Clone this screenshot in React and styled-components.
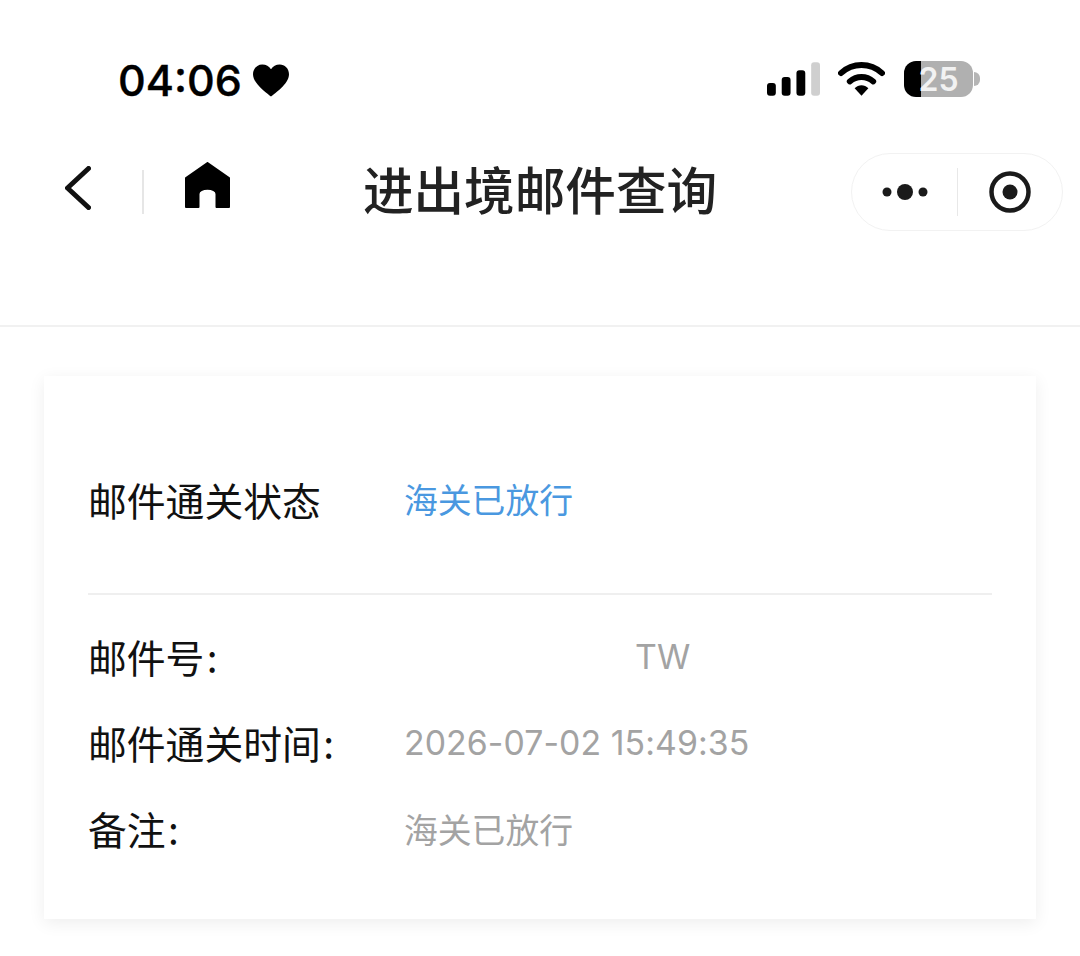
import React from 'react'
import styled, { createGlobalStyle } from 'styled-components'

const GlobalStyle = createGlobalStyle`
    html, body {
        margin: 0;
        padding: 0;
        background: #fff;
        font-family: Inter, "Noto Sans CJK SC", "Liberation Sans", sans-serif;
    }
`

const Page = styled.div`
    width: 1080px;
    height: 956px;
    overflow: hidden;
    background: #fff;
`

const StatusBar = styled.div`
    height: 132px;
    box-sizing: border-box;
    padding: 54px 100px 0 118px;
    display: flex;
    justify-content: space-between;
    align-items: flex-start;
`

const Clock = styled.div`
    display: flex;
    align-items: center;
    height: 52px;
    gap: 11px;
    font-size: 43px;
    font-weight: 500;
    color: #000;
    -webkit-text-stroke: 0.4px #000;
`

const StatusIcons = styled.div`
    display: flex;
    align-items: center;
    height: 50px;
`

const Wifi = styled.svg`
    margin: 0 19px 0 18px;
`

const Battery = styled.div`
    width: 69px;
    height: 36px;
    border-radius: 12px;
    overflow: hidden;
    display: flex;
    align-items: center;
    justify-content: center;
    font-size: 32px;
    font-weight: 600;
    color: #f2f2f2;
    background: linear-gradient(90deg, #000 0 17px, #b0b0b0 17px);
`

const BatteryCap = styled.div`
    width: 6px;
    height: 14px;
    margin-left: 1px;
    background: #b5b5b5;
    border-radius: 0 6px 6px 0;
`

const NavBar = styled.div`
    height: 195px;
    box-sizing: border-box;
    padding-top: 21px;
    border-bottom: 2px solid #f1f1f1;
    display: grid;
    grid-template-columns: 1fr auto 1fr;
    align-items: start;
`

const NavLeft = styled.div`
    display: flex;
    align-items: center;
    height: 78px;
    padding-left: 65px;
`

const BackIcon = styled.svg`
    margin-top: -9px;
`

const NavDivider = styled.div`
    width: 2px;
    height: 44px;
    margin: 0 41px 0 51px;
    background: #e6e6e6;
`

const Title = styled.div`
    height: 78px;
    line-height: 70px;
    font-size: 50.6px;
    font-weight: 500;
    color: #222;
    font-family: "Noto Sans CJK SC", sans-serif;
`

const Capsule = styled.div`
    justify-self: end;
    margin-right: 17px;
    width: 212px;
    height: 78px;
    box-sizing: border-box;
    border: 1px solid #f2f2f2;
    border-radius: 39px;
    display: flex;
    align-items: center;
    padding-left: 30px;
`

const CapsuleDivider = styled.div`
    width: 1px;
    height: 48px;
    margin: 0 31px 0 28px;
    background: #e8e8e8;
`

const Card = styled.div`
    width: 992px;
    height: 543px;
    margin: 49px 0 0 44px;
    box-sizing: border-box;
    padding: 0 44px;
    background: #fff;
    box-shadow: 0 4px 16px rgba(0, 0, 0, 0.07);
    font-family: "Noto Sans CJK SC", sans-serif;
`

const StatusRow = styled.div`
    height: 219px;
    display: flex;
    align-items: center;
    padding-top: 28px;
    box-sizing: border-box;
    border-bottom: 2px solid #efefef;
`

const Details = styled.div`
    padding-top: 18px;
`

const Row = styled.div`
    height: 86px;
    display: flex;
    align-items: center;
`

const Label = styled.div`
    width: 316px;
    flex: none;
    box-sizing: border-box;
    font-size: 38.8px;
    color: #111;
`

const Value = styled.div`
    font-size: 33.8px;
    color: ${p => p.$accent ? '#4a98e0' : '#a3a3a3'};
    padding-left: ${p => p.$indent || 0}px;
    font-family: ${p => p.$latin ? 'Inter, "Noto Sans CJK SC", sans-serif' : 'inherit'};
    letter-spacing: ${p => p.$latin ? '0.08px' : '0'};
`

const HomeIcon = styled.svg`
    margin-top: -14px;
`

const rows = [
    { label: '邮件号\u200a:', value: 'TW', indent: 231, latin: true },
    { label: '邮件通关时间\u200a:', value: '2026-07-02 15:49:35', latin: true },
    { label: '备注\u200a:', value: '海关已放行' },
]

const App = () => (
    <Page>
        <GlobalStyle />
        <StatusBar>
            <Clock>
                04:06
                <svg width="36" height="33" viewBox="0 0 37 33">
                    <path d="M18.5 33C15 30 0 20 0 10C0 4 4.500 0 9.500 0C13.500 0 16.500 2 18.500 5C20.500 2 23.500 0 27.500 0C32.500 0 37 4 37 10C37 20 22 30 18.500 33Z" fill="#000" />
                </svg>
            </Clock>
            <StatusIcons>
                <svg width="53" height="34" viewBox="0 0 54 34">
                    <rect x="0" y="21" width="9" height="13" rx="3" fill="#000" />
                    <rect x="15" y="15" width="9" height="19" rx="3" fill="#000" />
                    <rect x="30" y="8" width="9" height="26" rx="3" fill="#000" />
                    <rect x="45" y="0" width="9" height="34" rx="3" fill="#cfcfcf" />
                </svg>
                <Wifi width="47" height="34" viewBox="0 0 48 34">
                    <path d="M3 11C15 0 33 0 45 11" fill="none" stroke="#000" strokeWidth="6" strokeLinecap="round" />
                    <path d="M12 19.500C19 13.500 29 13.500 36 19.500" fill="none" stroke="#000" strokeWidth="6" strokeLinecap="round" />
                    <path d="M17 26.500C21 22.500 27 22.500 31 26.500L24 34Z" fill="#000" />
                </Wifi>
                <Battery>25</Battery>
                <BatteryCap />
            </StatusIcons>
        </StatusBar>
        <NavBar>
            <NavLeft>
                <BackIcon width="26" height="44" viewBox="0 0 26 44">
                    <path d="M23.500 2.500L2.500 22L23.500 41.500" fill="none" stroke="#111" strokeWidth="5" strokeLinecap="round" strokeLinejoin="round" />
                </BackIcon>
                <NavDivider />
                <HomeIcon width="45" height="46" viewBox="0 0 45 46">
                    <path d="M22.500 1L44 16V45H31.500V32C31.500 25 13.500 25 13.500 32V45H1V16Z" fill="#000" stroke="#000" strokeWidth="2" strokeLinejoin="round" />
                </HomeIcon>
            </NavLeft>
            <Title>进出境邮件查询</Title>
            <Capsule>
                <svg width="47" height="18" viewBox="0 0 47 18">
                    <circle cx="5" cy="9" r="4.500" fill="#1a1a1a" />
                    <circle cx="23" cy="9" r="8" fill="#1a1a1a" />
                    <circle cx="41" cy="9" r="4.500" fill="#1a1a1a" />
                </svg>
                <CapsuleDivider />
                <svg width="42" height="42" viewBox="0 0 42 42">
                    <circle cx="21" cy="21" r="18.500" fill="none" stroke="#1a1a1a" strokeWidth="4.500" />
                    <circle cx="21" cy="21" r="7.500" fill="#1a1a1a" />
                </svg>
            </Capsule>
        </NavBar>
        <Card>
            <StatusRow>
                <Label>邮件通关状态</Label>
                <Value $accent>海关已放行</Value>
            </StatusRow>
            <Details>
                {rows.map(row => (
                    <Row key={row.label}>
                        <Label>{row.label}</Label>
                        <Value $indent={row.indent} $latin={row.latin}>{row.value}</Value>
                    </Row>
                ))}
            </Details>
        </Card>
    </Page>
)

export default App
